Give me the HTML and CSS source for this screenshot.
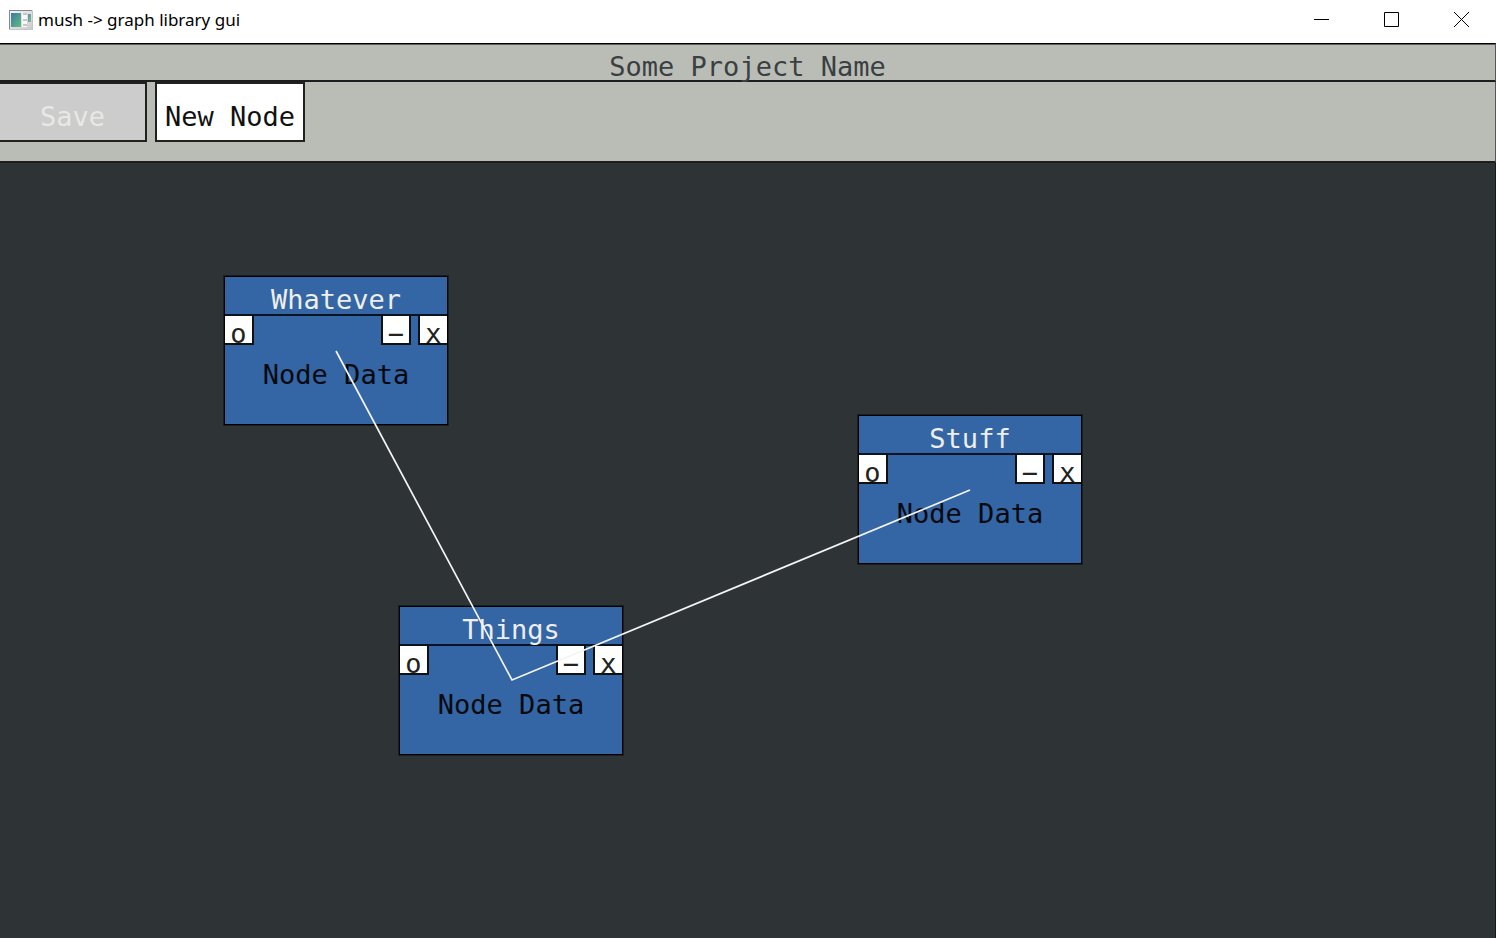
FILE: index.html
```html
<!DOCTYPE html>
<html lang="en">
<head>
<meta charset="utf-8">
<title>mush -&gt; graph library gui</title>
<link rel="stylesheet" href="styles.css">
</head>
<body>
<div class="window">
  <header class="titlebar">
    <svg class="app-icon" width="24" height="20" viewBox="0 0 24 20" aria-hidden="true">
      <defs>
        <linearGradient id="pane" x1="0" y1="0" x2="1" y2="1">
          <stop offset="0" stop-color="#3f78a8"/>
          <stop offset="1" stop-color="#5fbf78"/>
        </linearGradient>
        <linearGradient id="frame" x1="0" y1="0" x2="1" y2="1">
          <stop offset="0" stop-color="#f6f6f6"/>
          <stop offset="1" stop-color="#c9c9cc"/>
        </linearGradient>
      </defs>
      <rect width="24" height="20" fill="url(#frame)"/>
      <path d="M0 .5H23M.5 0V19" stroke="#85878f" fill="none"/>
      <path d="M0 19.5H24M23.5 1V20" stroke="#c4c4ca" fill="none"/>
      <rect x="2" y="3" width="10" height="14" fill="url(#pane)"/>
      <rect x="13" y="3" width="5" height="14" fill="#f8f8f8"/>
      <path d="M14 4h4M14 10h4M14 15h4" stroke="#c6c6ca" stroke-width="2"/>
      <rect x="19" y="4" width="3" height="8" fill="url(#pane)" opacity=".8"/>
    </svg>
    <h1 class="window-title">mush -&gt; graph library gui</h1>
    <div class="window-controls">
      <button type="button" aria-label="Minimize"><svg width="15" height="15" viewBox="0 0 15 15"><path d="M0 7.500H15"/></svg></button>
      <button type="button" aria-label="Maximize"><svg width="15" height="15" viewBox="0 0 15 15"><path d="M.5.5h14v14H.5z"/></svg></button>
      <button type="button" aria-label="Close"><svg width="15" height="15" viewBox="0 0 15 15"><path d="M0 0 15 15M15 0 0 15"/></svg></button>
    </div>
  </header>
  <h2 class="project-name">Some Project Name</h2>
  <nav class="toolbar">
    <button type="button" class="tool save" disabled>Save</button>
    <button type="button" class="tool">New Node</button>
  </nav>
  <main class="canvas">
    <article class="node whatever">
      <h3>Whatever</h3>
      <div class="node-actions"><button type="button">o</button><button type="button">−</button><button type="button">x</button></div>
      <p>Node Data</p>
    </article>
    <article class="node stuff">
      <h3>Stuff</h3>
      <div class="node-actions"><button type="button">o</button><button type="button">−</button><button type="button">x</button></div>
      <p>Node Data</p>
    </article>
    <article class="node things">
      <h3>Things</h3>
      <div class="node-actions"><button type="button">o</button><button type="button">−</button><button type="button">x</button></div>
      <p>Node Data</p>
    </article>
    <svg class="links" aria-hidden="true"><path d="M336 188 512 517 970 327"/></svg>
  </main>
</div>
</body>
</html>
```
FILE: styles.css
```css
* { box-sizing: border-box; }
body { margin: 0; }
h1, h2, h3, p { margin: 0; font-weight: 400; }
button { padding: 0; border: 0; background: none; font: inherit; color: inherit; }

.window {
  display: flex;
  flex-direction: column;
  min-height: 100vh;
  font: 27px/36px "DejaVu Sans Mono", monospace;
}

.titlebar {
  display: flex;
  align-items: center;
  gap: 5px;
  height: 43px;
  padding: 0 0 4px 9px;
  background: #fff;
}
.window-title {
  flex: 1;
  padding-top: 1px;
  font: 17px/24px "Noto Sans", sans-serif;
  color: #000;
}
.window-controls { display: flex; }
.window-controls button {
  display: flex;
  align-items: center;
  justify-content: center;
  width: 70px;
  height: 39px;
}
.window-controls svg { fill: none; stroke: #000; stroke-width: 1; }

.project-name {
  padding-top: 5px;
  height: 39px;
  border-top: 1px solid #000;
  border-bottom: 2px solid #1c1d1c;
  border-right: 1px solid #555;
  background: #babdb6;
  box-shadow: inset 0 1px #5d5f5b;
  color: #3a4042;
  font-size: 27px;
  line-height: 36px;
  text-align: center;
}

.toolbar {
  display: flex;
  gap: 8px;
  padding-bottom: 19px;
  border-right: 1px solid #555;
  border-bottom: 2px solid #1c1d1c;
  background: #babdb6;
}
.tool {
  min-width: 150px;
  height: 60px;
  padding-top: 9px;
  border: 2px solid #202120;
  background: #fff;
  color: #111;
}
.tool.save {
  min-width: 147px;
  border-left: 0;
  background: #ccc;
  color: #e8e8e6;
}

.canvas {
  position: relative;
  flex: 1;
  border-right: 1px solid #15191a;
  background: #2e3436;
  overflow: hidden;
}
/* Nodes sit freely on the canvas. */
.node {
  position: absolute;
  width: 224px;
  height: 149px;
  border: 1px solid #000;
  box-shadow: 0 0 0 1px #1a1e1f;
  background: #3465a4;
  text-align: center;
}
.whatever { left: 224px; top: 113px; }
.stuff { left: 858px; top: 252px; }
.things { left: 399px; top: 443px; }
.node h3 {
  height: 39px;
  padding-top: 5px;
  border-bottom: 2px solid #0a1420;
  color: #eeeeec;
  font-size: 27px;
  line-height: 36px;
}
.node-actions { display: flex; gap: 7px; }
.node-actions button {
  width: 30px;
  height: 29px;
  padding-top: 5px;
  border: solid #111;
  border-width: 0 2px 2px;
  background: #fff;
  color: #222;
  line-height: 25px;
}
.node-actions button:first-child { width: 29px; margin-right: auto; border-left-width: 0; }
.node-actions button:last-child { border-right-width: 0; width: 29px; }
.node p { padding-top: 12px; color: #05090e; }

.links {
  position: absolute;
  inset: 0;
  width: 100%;
  height: 100%;
  fill: none;
  stroke: #f4f4f4;
  stroke-width: 1.7;
  pointer-events: none;
}
```
